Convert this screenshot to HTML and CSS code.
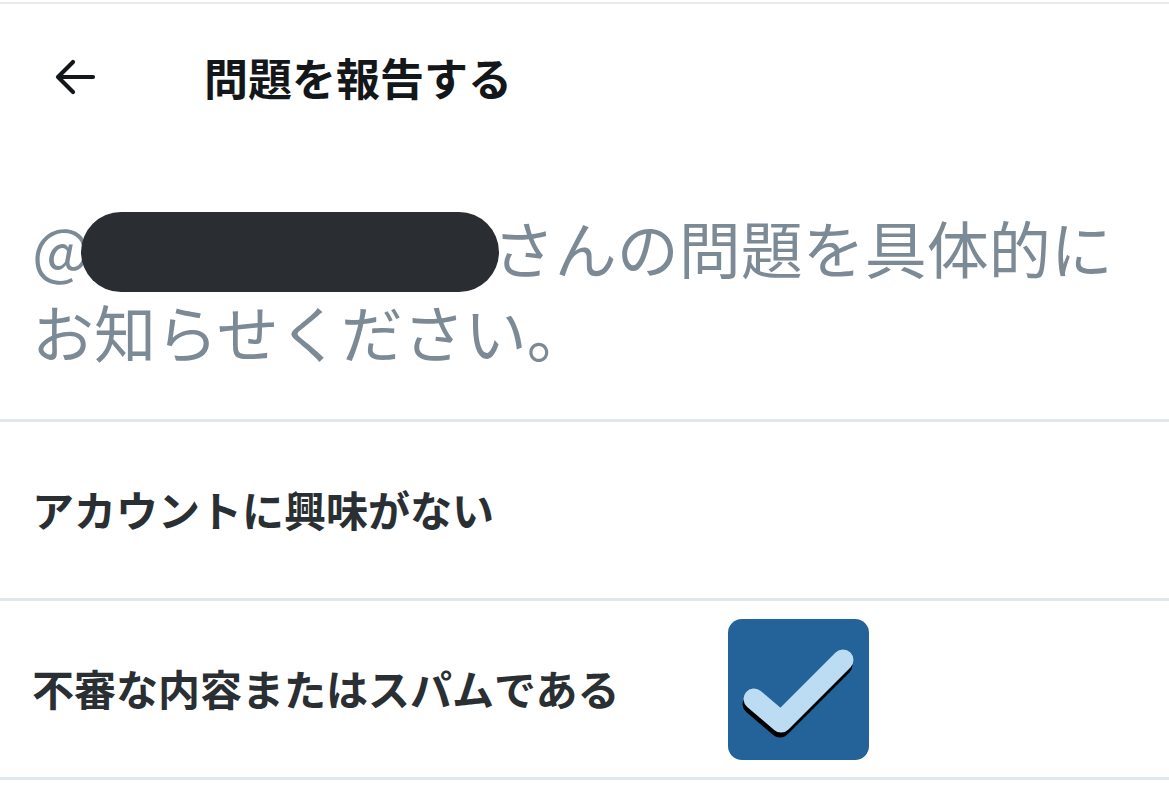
FILE: index.html
```html
<!DOCTYPE html>
<html lang="ja">
<head>
<meta charset="utf-8">
<title>問題を報告する</title>
<link rel="stylesheet" href="styles.css">
</head>
<body>
<div class="page">
  <header class="header">
    <span class="back" aria-label="戻る">
      <svg width="44" height="40" viewBox="0 0 44 40" aria-hidden="true">
        <path d="M40 20 H6 M20 5 L5 20 L20 35" fill="none" stroke="#14171a" stroke-width="4.2" stroke-linecap="round" stroke-linejoin="round"/>
      </svg>
    </span>
    <h1 class="title">問題を報告する</h1>
  </header>

  <section class="prompt">
    <p class="prompt-text">@<span class="redact"></span>さんの問題を具体的に<br>お知らせください。</p>
  </section>

  <ul class="options">
    <li class="option">アカウントに興味がない</li>
    <li class="option">不審な内容またはスパムである
      <svg class="check" width="141" height="141" viewBox="0 0 141 141" aria-hidden="true">
        <rect x="0" y="0" width="141" height="141" rx="14" ry="14" fill="#236399"/>
        <path d="M25 85 L52 108 L114 46" fill="none" stroke="#000" stroke-width="21" stroke-linecap="round" stroke-linejoin="round"/>
        <path d="M26 80 L53 103 L115 41" fill="none" stroke="#bbdcf3" stroke-width="21" stroke-linecap="round" stroke-linejoin="round"/>
      </svg>
    </li>
  </ul>
</div>
</body>
</html>
```

FILE: styles.css
```css
html, body {
  margin: 0;
  padding: 0;
  background: #ffffff;
}

body {
  font-family: "Noto Sans CJK JP", "Noto Sans", sans-serif;
  color: #14171a;
}

.page {
  padding-top: 2px;
}

.header {
  display: flex;
  align-items: center;
  height: 148px;
  border-top: 2px solid #e8eaec;
  box-sizing: border-box;
  padding-left: 53px;
}

.back {
  display: flex;
  width: 44px;
  height: 40px;
}

.title {
  margin: 0 0 0 107px;
  font-size: 44px;
  font-weight: 700;
  line-height: 1;
  color: #14171a;
}

.prompt {
  padding: 58px 32px 49px;
}

.prompt-text {
  margin: 0;
  font-size: 62px;
  line-height: 78px;
  font-weight: 400;
  color: #7c8a96;
  white-space: nowrap;
}

.redact {
  display: inline-block;
  width: 418px;
  height: 80px;
  border-radius: 40px;
  background: #2a2e33;
  vertical-align: middle;
  margin: -10px -6px 0 -10px;
}

.options {
  list-style: none;
  margin: 0;
  padding: 0;
  border-top: 3px solid #e1e8ed;
}

.option {
  display: flex;
  align-items: center;
  height: 176px;
  box-sizing: border-box;
  padding: 0 0 4px 32px;
  border-bottom: 3px solid #e1e8ed;
  font-size: 42px;
  font-weight: 700;
  color: #292f33;
}

.option {
  height: 179px;
}

.check {
  margin-left: 108px;
  margin-top: 4px;
  flex: none;
}
```
